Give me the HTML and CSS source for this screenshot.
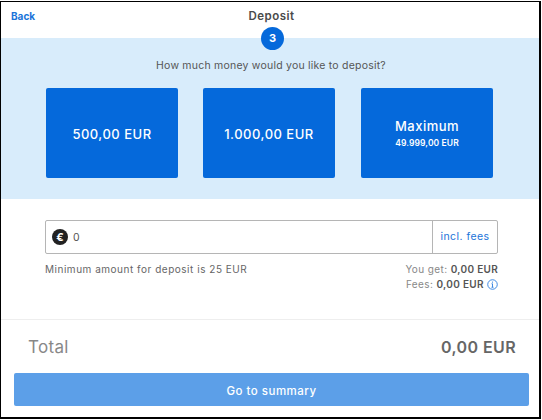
FILE: index.html
```html
<!DOCTYPE html>
<html lang="en">
<head>
<meta charset="UTF-8" />
<title>Deposit</title>
<link rel="stylesheet" href="styles.css">
</head>
<body>
<main class="frame">
  <header class="top">
    <a class="back" href="#">Back</a>
    <h1>Deposit</h1>
    <span class="step">3</span>
  </header>

  <section class="choose">
    <p class="question">How much money would you like to deposit?</p>
    <div class="amounts">
      <button class="amount" type="button">500,00 EUR</button>
      <button class="amount" type="button">1.000,00 EUR</button>
      <button class="amount" type="button">Maximum<small>49.999,00 EUR</small></button>
    </div>
  </section>

  <section class="entry">
    <div class="field">
      <span class="euro">€</span>
      <span class="value">0</span>
      <span class="addon">incl. fees</span>
    </div>
    <div class="notes">
      <p class="minimum">Minimum amount for deposit is 25 EUR</p>
      <div class="fees">
        <p>You get: <b>0,00 EUR</b></p>
        <p>Fees: <b>0,00 EUR</b>
          <svg class="info" width="11" height="11" viewBox="0 0 12 12" aria-hidden="true">
            <circle cx="6" cy="6" r="5.2" fill="none" stroke="#2f80e0" stroke-width="1"/>
            <path d="M6 5.2V9M4.9 9h2.2M4.9 5.2H6" fill="none" stroke="#2f80e0" stroke-width="1"/>
            <circle cx="6" cy="3.3" r=".7" fill="#2f80e0"/>
          </svg>
        </p>
      </div>
    </div>
  </section>

  <footer class="summary">
    <div class="total">
      <span class="total-label">Total</span>
      <span class="total-value">0,00 EUR</span>
    </div>
    <button class="next" type="button">Go to summary</button>
  </footer>
</main>
</body>
</html>
```

FILE: styles.css
```css
/* Reset and base */
* {
  box-sizing: border-box;
}
html, body {
  margin: 0;
  padding: 0;
  background: #fff;
}
body {
  padding: 1px 1px 1px 0;
  font-family: "Inter", "Liberation Sans", sans-serif;
  color: #555;
}
p, h1 {
  margin: 0;
}

.frame {
  width: 541px;
  height: 418px;
  border: 1px solid #000;
  border-width: 1px 2px 2px 1px;
  display: flex;
  flex-direction: column;
}

/* Header with step badge */
.top {
  height: 36px;
  position: relative;
  text-align: center;
}
.back {
  position: absolute;
  left: 10px;
  top: 7px;
  font-size: 10px;
  font-weight: 700;
  line-height: 14px;
  color: #1a73d9;
  text-decoration: none;
}
.top h1 {
  padding-top: 6px;
  padding-left: 3px;
  font-size: 11.5px;
  font-weight: 600;
  line-height: 16px;
  letter-spacing: .5px;
  color: #4a4a4a;
}
.step {
  position: absolute;
  left: 260px;
  top: 25px;
  width: 23px;
  height: 23px;
  border-radius: 50%;
  background: #0569db;
  color: #fff;
  font-size: 11px;
  font-weight: 700;
  line-height: 23px;
  text-align: center;
  z-index: 2;
}

/* Quick amounts */
.choose {
  height: 161px;
  background: #d8ecfb;
  padding: 21px 46px 0 45px;
}
.question {
  padding-left: 3px;
  font-size: 10.5px;
  line-height: 14px;
  letter-spacing: .22px;
  text-align: center;
}
.amounts {
  display: flex;
  gap: 25px;
  margin-top: 15px;
}
.amount {
  width: 132px;
  height: 90px;
  padding: 2px 0 0;
  border: 0;
  border-radius: 2px;
  background: #0569db;
  color: #fff;
  font: 500 13px/17px "Inter", "Liberation Sans", sans-serif;
  letter-spacing: .5px;
}
.amount:last-child {
  margin-left: auto;
}
.amount small {
  display: block;
  margin-top: 2px;
  font-size: 8.5px;
  font-weight: 600;
  line-height: 13px;
  letter-spacing: .1px;
}

/* Manual entry */
.entry {
  flex: 1;
  padding: 21px 41px 0 44px;
  border-bottom: 1px solid #eee;
}
.field {
  height: 34px;
  display: flex;
  align-items: center;
  border: 1px solid #b5b5b5;
  border-radius: 2px;
}
.euro {
  width: 16px;
  height: 16px;
  margin-left: 6px;
  border-radius: 50%;
  background: #222;
  color: #fff;
  font-size: 11px;
  font-weight: 700;
  line-height: 16px;
  text-align: center;
}
.value {
  flex: 1;
  margin-left: 5px;
  font-size: 10.5px;
}
.addon {
  width: 65px;
  height: 100%;
  border-left: 1px solid #b5b5b5;
  color: #1a73d9;
  font-size: 10.5px;
  line-height: 32px;
  letter-spacing: .45px;
  text-align: center;
}
.notes {
  display: flex;
  justify-content: space-between;
  margin-top: 8px;
  font-size: 10px;
  line-height: 15px;
  letter-spacing: .52px;
}
.minimum {
  color: #666;
}
.fees {
  text-align: right;
  color: #888;
  letter-spacing: .4px;
}
.fees b {
  font-weight: 600;
  color: #555;
  letter-spacing: .3px;
}
.info {
  vertical-align: -2px;
}

/* Total and submit */
.summary {
  height: 97px;
  padding: 16px 10px 0 13px;
}
.total {
  display: flex;
  justify-content: space-between;
  align-items: center;
  height: 20px;
  padding: 1px 13px 0 14px;
}
.total-label {
  font-size: 17px;
  font-weight: 400;
  letter-spacing: .3px;
  color: #888;
}
.total-value {
  font-size: 16px;
  font-weight: 600;
  letter-spacing: .4px;
  color: #666;
}
.next {
  display: block;
  width: 100%;
  height: 33px;
  margin-top: 17px;
  padding: 2px 0 0;
  border: 0;
  border-radius: 2px;
  background: #5c9fe8;
  color: #fff;
  font: 500 11.5px "Inter", "Liberation Sans", sans-serif;
  letter-spacing: .5px;
}
```
